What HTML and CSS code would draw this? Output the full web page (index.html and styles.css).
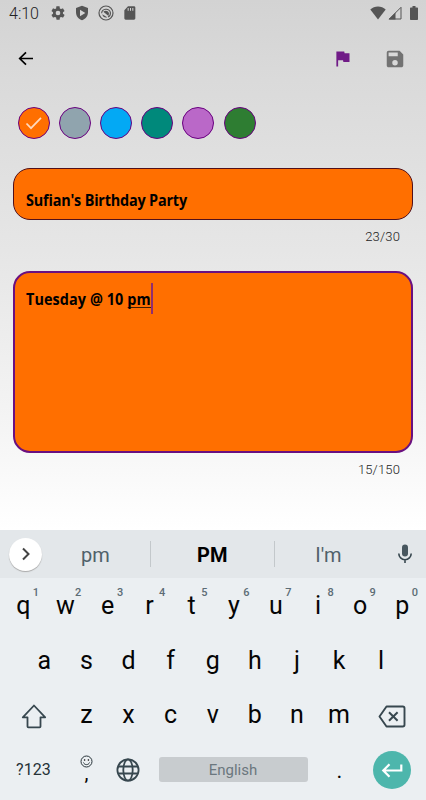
FILE: index.html
```
<!DOCTYPE html>
<html lang="en">
<head>
<meta charset="utf-8">
<title>Note</title>
<link rel="stylesheet" href="styles.css">
</head>
<body>
<main class="screen">
  <header class="status">
    <span class="time">4:10</span>
    <svg class="gear" width="16" height="16" viewBox="0 0 24 24"><path d="M19.4 13c.1-.6.1-1.300 0-2l2.100-1.600c.2-.2.200-.4.1-.6l-2-3.500c-.1-.2-.4-.3-.6-.2l-2.500 1c-.5-.4-1.100-.7-1.700-1l-.4-2.600c0-.3-.2-.5-.4-.5h-4c-.3 0-.5.2-.5.4l-.3 2.700c-.6.3-1.200.6-1.700 1L5 5.100c-.2-.1-.5 0-.6.2l-2 3.500c-.1.200-.1.400.1.600L4.600 11c-.1.700-.1 1.400 0 2l-2.100 1.600c-.2.200-.2.400-.1.600l2 3.500c.1.200.4.300.6.200l2.500-1c.5.400 1.100.7 1.700 1l.4 2.600c0 .3.200.5.400.5h4c.3 0 .5-.2.500-.4l.4-2.700c.6-.3 1.200-.6 1.700-1l2.500 1c.2.100.5 0 .6-.2l2-3.500c.1-.2.100-.4-.1-.6zM12 15.500a3.500 3.500 0 1 1 0-7 3.500 3.500 0 0 1 0 7z"/></svg>
    <svg class="shield" width="16" height="16" viewBox="0 0 24 24"><path fill-rule="evenodd" d="M12 1 3 4.500V11c0 5.500 3.800 10.500 9 12 5.200-1.500 9-6.500 9-12V4.500zM9 7l8 5-8 5z"/></svg>
    <svg class="radar" width="16" height="16" viewBox="0 0 16 16"><circle cx="8" cy="8" r="7" fill="none" stroke="#555" stroke-width="1.200"/><path d="M3.600 8.200A4.500 4.500 0 0 1 12.400 7.500c.3 2-.8 3.700-2.400 4.500" fill="none" stroke="#555" stroke-width="1.100"/><path d="M5.300 6.700c2-1.500 4.700-1 5.700 1.500l-.5 2.800zM4.200 9.200l5 3.100c-2.300.8-4.500-.6-5-3.100z"/></svg>
    <svg class="sd" width="16" height="16" viewBox="0 0 24 24"><path fill-rule="evenodd" d="M18 2H9L3.500 8v12c0 1.100.9 2 2 2H18c1.100 0 2-.9 2-2V4c0-1.100-.9-2-2-2zM10 4.500v4H8.500v-4zm3.500 0v4H12v-4zm3.500 0v4h-1.500v-4z"/></svg>
    <svg class="wifi" width="16" height="14" viewBox="0 0 16 14"><path d="M8 13.500.3 3.600C4.500-.4 11.500-.4 15.700 3.600z"/></svg>
    <svg class="signal" width="14" height="14" viewBox="0 0 14 14"><path d="M1.300 13 13 1.300V13z" fill="none" stroke="#555"/><path d="M.5 13.500 7.500 6.500v7z"/></svg>
    <svg class="battery" width="8" height="14" viewBox="0 0 8 14"><path d="M2.500 0h3v1.500H7c.6 0 1 .4 1 1V13c0 .6-.4 1-1 1H1c-.6 0-1-.4-1-1V2.500c0-.6.4-1 1-1h1.500z"/></svg>
  </header>
  <nav class="appbar">
    <svg class="back" width="16" height="16" viewBox="0 0 16 16"><path d="M15 7.500H2M8 1.300 1.700 7.500 8 13.700" fill="none" stroke="#000" stroke-width="1.700"/></svg>
    <svg class="flag" width="21" height="21" viewBox="0 0 24 24"><path d="M14.400 6 14 4H5v17h2v-7h5.600l.4 2h7V6z" fill="#701b87"/></svg>
    <svg class="save" width="22" height="22" viewBox="0 0 24 24"><path d="M17 3H5a2 2 0 0 0-2 2v14c0 1.100.9 2 2 2h14c1.100 0 2-.9 2-2V7zm-5 16a3 3 0 1 1 0-6 3 3 0 0 1 0 6zm3-10H5V5h10z" fill="#727272"/></svg>
  </nav>
  <section class="swatches">
    <span class="swatch orange"><svg width="18" height="14" viewBox="0 0 18 14"><path d="m1.500 7.500 4.500 4.700L16 1.800" fill="none" stroke="#ffd9bd" stroke-width="1.700"/></svg></span>
    <span class="swatch gray"></span>
    <span class="swatch blue"></span>
    <span class="swatch teal"></span>
    <span class="swatch violet"></span>
    <span class="swatch green"></span>
  </section>
  <div class="field title"><span class="text">Sufian's Birthday Party</span></div>
  <div class="count">23/30</div>
  <div class="field note"><span class="text"><span>Tuesday @ 10&nbsp;</span><span class="composing">pm</span><i class="caret"></i></span></div>
  <div class="count">15/150</div>
</main>
<section class="keyboard">
  <div class="suggest">
    <span class="expand"><svg width="10" height="14" viewBox="0 0 10 14"><path d="m2 1.500 5.500 5.500L2 12.500" fill="none" stroke="#444" stroke-width="2"/></svg></span>
    <span class="word">pm</span>
    <span class="word best">PM</span>
    <span class="word">I'm</span>
    <svg class="mic" width="16" height="20" viewBox="0 0 16 20"><rect x="5" y=".5" width="6" height="12" rx="3" fill="#48575f"/><path d="M1.800 9.500a6.200 6.200 0 0 0 12.400 0M8 15.500V19" fill="none" stroke="#37474f" stroke-width="1.600"/></svg>
  </div>
  <div class="row">
    <span class="key">q<sup>1</sup></span><span class="key">w<sup>2</sup></span><span class="key">e<sup>3</sup></span><span class="key">r<sup>4</sup></span><span class="key">t<sup>5</sup></span><span class="key">y<sup>6</sup></span><span class="key">u<sup>7</sup></span><span class="key">i<sup>8</sup></span><span class="key">o<sup>9</sup></span><span class="key">p<sup>0</sup></span>
  </div>
  <div class="row">
    <span class="key">a</span><span class="key">s</span><span class="key">d</span><span class="key">f</span><span class="key">g</span><span class="key">h</span><span class="key">j</span><span class="key">k</span><span class="key">l</span>
  </div>
  <div class="row">
    <span class="key wide"><svg width="26" height="25" viewBox="0 0 26 25"><path d="M13 1.500 1.800 13.300h4.700v9.200c0 .6.3.9.9.9h11.200c.6 0 .9-.3.9-.9v-9.200h4.700z" fill="none" stroke="#37474f" stroke-width="1.800" stroke-linejoin="round"/></svg></span><span class="key">z</span><span class="key">x</span><span class="key">c</span><span class="key">v</span><span class="key">b</span><span class="key">n</span><span class="key">m</span><span class="key wide del"><svg width="28" height="23" viewBox="0 0 28 23"><path d="M8.500 1.500h16.300c.9 0 1.700.8 1.700 1.700v16.600c0 .9-.8 1.700-1.700 1.700H8.500L1.500 11.500z" fill="none" stroke="#37474f" stroke-width="1.900" stroke-linejoin="round"/><path d="m11 7.200 8.600 8.600m0-8.600L11 15.800" stroke="#37474f" stroke-width="2"/></svg></span>
  </div>
  <div class="row bottom">
    <span class="mode">?123</span>
    <span class="comma"><svg width="13" height="13" viewBox="0 0 13 13"><circle cx="6.500" cy="6.500" r="5.500" fill="none" stroke="#263238"/><path d="M3.500 7.500c.8 2.800 5.200 2.800 6 0" fill="none" stroke="#263238"/><circle cx="4.600" cy="5" r=".8"/><circle cx="8.400" cy="5" r=".8"/></svg><b>,</b></span>
    <svg class="globe" width="24" height="24" viewBox="0 0 24 24" fill="none" stroke="#37474f" stroke-width="1.800"><circle cx="12" cy="12" r="10.600"/><ellipse cx="12" cy="12" rx="4.700" ry="10.600"/><path d="M2.300 8.500h19.400M2.300 15.500h19.400"/></svg>
    <span class="space">English</span>
    <span class="dot">.</span>
    <span class="enter"><svg width="22" height="16" viewBox="0 0 22 16"><path d="M20.300 2.500v6H2.500M8.500 2.300 2.300 8.500l6.200 6.200" fill="none" stroke="#fff" stroke-width="2.200"/></svg></span>
  </div>
</section>
</body>
</html>
```

FILE: styles.css
```
* { box-sizing: border-box; }
body {
  margin: 0;
  width: 426px;
  height: 800px;
  overflow: hidden;
  font-family: Roboto, "Liberation Sans", sans-serif;
}
svg { display: block; flex: none; }
.screen {
  height: 530px;
  padding: 0 13px;
  background: linear-gradient(#d3d3d3 0, #dadada 80px, #e6e6e6 250px, #f5f5f5 430px, #fff 530px);
}
.status {
  display: flex;
  align-items: center;
  height: 26px;
  margin: 0 -13px;
  padding-left: 9px;
  fill: #555;
}
.time { width: 41px; font-size: 16px; font-weight: 300; line-height: 26px; color: #222; padding-top: 1px; }
.status .shield, .status .radar, .status .sd { margin-left: 8px; }
.wifi { margin-left: 231.500px; }
.signal { margin-left: 2px; }
.battery { margin-left: 8px; }
.appbar { display: flex; align-items: center; height: 64px; padding: 1px 0 0 5px; }
.flag { margin-left: 298px; }
.save { margin-left: 30.500px; }
.swatches { display: flex; gap: 9.200px; height: 33px; margin: 16.500px 0 0 4.700px; }
.swatch {
  display: flex;
  align-items: center;
  justify-content: center;
  width: 32px;
  height: 32px;
  border: 1px solid #6a0080;
  border-radius: 50%;
}
.orange { background: #ff6f00; }
.gray { background: #90a4ae; }
.blue { background: #03a9f4; }
.teal { background: #00897b; }
.violet { background: #ba68c8; }
.green { background: #2e7d32; }
.field {
  width: 400px;
  border-radius: 17px;
  background: #ff6f00;
  font-family: "Open Sans", "Noto Sans", sans-serif;
  font-size: 16px;
  font-weight: 700;
  line-height: 24px;
  letter-spacing: -0.200px;
}
.text { display: inline-flex; transform: scaleX(.9); transform-origin: left; }
.title { height: 52px; margin-top: 28.500px; padding: 19px 12px 0; border: 1px solid #51101b; }
.note { height: 182.500px; margin-top: 18.500px; padding: 14px 11px 0; border: 2px solid #6a1080; letter-spacing: .1px; }
.composing { height: 21px; border-bottom: 1px solid #421d00; }
.caret { width: 2px; height: 31px; margin-top: -4px; background: #86277a; }
.count {
  height: 32px;
  padding-right: 13px;
  font-size: 13px;
  font-weight: 300;
  line-height: 33px;
  text-align: right;
  color: #222;
  letter-spacing: .15px;
}
.keyboard { height: 270px; background: #ebeff2; color: #050505; }
.suggest { display: flex; align-items: center; height: 48px; padding-left: 9px; background: #e3e7ea; }
.expand {
  display: flex;
  align-items: center;
  justify-content: center;
  width: 33px;
  height: 33px;
  border-radius: 50%;
  background: #fff;
  box-shadow: 0 1px 1px #aaa;
}
.word {
  width: 124px;
  height: 26px;
  padding-top: 1px;
  border-left: 1px solid #c3c8cb;
  font-size: 20px;
  line-height: 26px;
  text-align: center;
  color: #50616a;
}
.expand + .word { width: 108px; padding-right: 1px; border: 0; }
.word.best { width: 123.500px; font-weight: 700; color: #000; }
.word:nth-child(4) { width: 109px; }
.mic { margin-left: 14px; }
.row { display: flex; justify-content: center; align-items: center; height: 54.500px; padding-right: .5px; }
.key { position: relative; width: 42.100px; padding-top: 2px; font-size: 25px; line-height: 54px; text-align: center; }
.key sup { position: absolute; left: 30.500px; top: 9px; font-size: 11px; font-weight: 500; line-height: 14px; color: #5c6c75; }
.wide { display: flex; align-items: center; justify-content: center; width: 63px; height: 54px; padding: 5px 0 0 1px; }
.bottom { justify-content: flex-start; padding: 2px 0 0; }
.mode { width: 54px; padding-left: 16px; font-size: 16px; color: #263238; letter-spacing: .1px; }
.comma { display: flex; flex-direction: column; align-items: center; width: 14px; margin-left: 25.500px; }
.comma b { height: 16px; font-size: 20px; font-weight: 400; line-height: 10px; }
.globe { margin-left: 22px; }
.space {
  width: 149px;
  height: 25px;
  margin-left: 19px;
  border-radius: 3px;
  background: #c8cccf;
  font-size: 15px;
  line-height: 26px;
  text-align: center;
  color: #6b777e;
}
.dot { width: 64px; padding-top: 2px; font-size: 22px; text-align: center; }
.enter {
  display: flex;
  align-items: center;
  justify-content: center;
  width: 38px;
  height: 38px;
  margin-left: 1px;
  border-radius: 50%;
  background: #4db6ac;
}
```
